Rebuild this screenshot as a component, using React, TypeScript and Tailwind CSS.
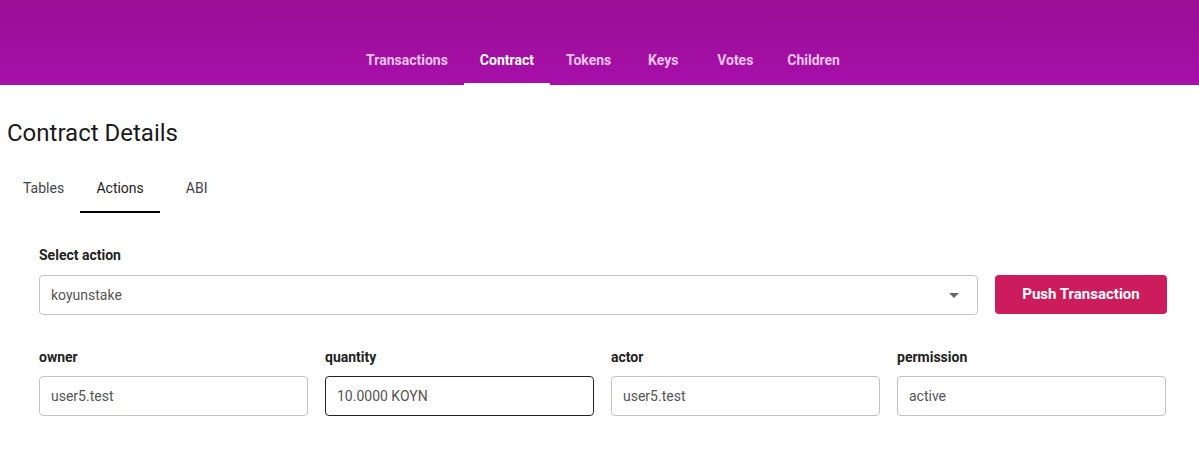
import React from "react";

const navItems = ["Transactions", "Contract", "Tokens", "Keys", "Votes", "Children"];

export default function App() {
  return (
    <div className="w-[1199px] h-[461px] bg-white overflow-hidden" style={{ fontFamily: "Roboto, 'Liberation Sans', sans-serif" }}>
      <header className="h-[85px] bg-gradient-to-b from-[#990f95] to-[#a70fa9] flex items-end justify-center pl-[7px]">
        <nav className="flex">
          {navItems.map((n) => (
            <div
              key={n}
              className={`relative h-[50px] min-w-[72px] px-4 flex items-center justify-center text-[14px] font-bold ${
                n === "Contract" ? "text-white" : "text-[#efc4ee]"
              }`}
            >
              {n}
              {n === "Contract" && <span className="absolute left-0 right-0 bottom-0 h-[2px] bg-white" />}
            </div>
          ))}
        </nav>
      </header>

      <h1 className="mt-[33px] ml-[7px] text-[24px] leading-[30px] text-[#1b1b1b] font-normal">Contract Details</h1>

      <div className="mt-[17px] ml-[7px] flex">
        <div className="h-[47px] min-w-[73px] px-4 flex items-center justify-center text-[14px] text-[#444]">Tables</div>
        <div className="relative h-[47px] w-[80px] flex items-center justify-center text-[14px] text-[#222]">
          Actions
          <span className="absolute left-0 right-0 -bottom-[1px] h-[2px] bg-black" />
        </div>
        <div className="h-[47px] min-w-[73px] px-4 flex items-center justify-center text-[14px] text-[#444]">ABI</div>
      </div>

      <div className="px-[39px] w-[1206px]">
        <div className="mt-[34px] text-[14px] leading-[18px] font-bold text-[#222]">Select action</div>
        <div className="mt-[11px] flex gap-[17px]">
          <div className="w-[939px] h-[40px] border border-[#c4c4c4] rounded-[4px] flex items-center justify-between pl-[11px] pr-[18px] text-[14px] text-[#555]">
            <span>koyunstake</span>
            <svg width="10" height="5" viewBox="0 0 10 5"><path d="M0 0h10L5 5z" fill="#666" /></svg>
          </div>
          <button className="w-[172px] h-[39px] rounded-[4px] bg-[#cc1c5c] text-white text-[15px] font-bold">Push Transaction</button>
        </div>

        <div className="mt-[33px] grid grid-cols-4 gap-x-[17px] w-[1127px]">
          {[
            ["owner", "user5.test", false],
            ["quantity", "10.0000 KOYN", true],
            ["actor", "user5.test", false],
            ["permission", "active", false],
          ].map(([l, v, f]) => (
            <div key={l as string}>
              <div className="text-[14px] leading-[18px] font-bold text-[#222]">{l}</div>
              <div
                className={`mt-[10px] h-[40px] rounded-[4px] flex items-center pl-[11px] text-[14px] text-[#555] border ${
                  f ? "border-[#222]" : "border-[#c4c4c4]"
                }`}
              >
                {v}
              </div>
            </div>
          ))}
        </div>
      </div>
    </div>
  );
}
